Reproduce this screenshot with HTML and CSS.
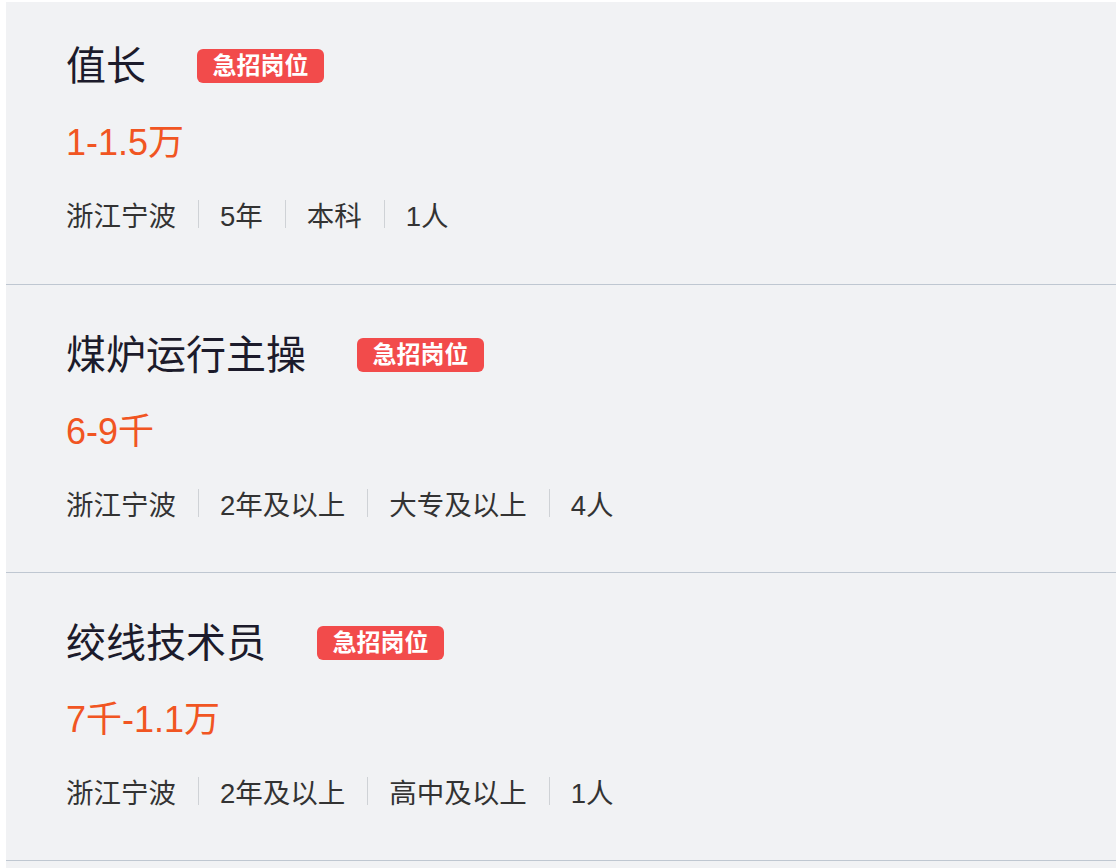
FILE: index.html
```html
<!DOCTYPE html>
<html>
  <head>
  <meta charset="utf-8">
  <link rel="stylesheet" href="styles.css">
  </head>
  <body>
    <div class="job-list">
      <div class="job">
        <div class="job-head">
          <span class="job-name">值长</span>
          <span class="urgent">急招岗位</span>
        </div>
        <div class="salary">1-1.5万</div>
        <div class="meta">
          <span>浙江宁波</span><i></i><span>5年</span><i></i><span>本科</span><i></i><span>1人</span>
        </div>
      </div>
      <div class="job">
        <div class="job-head">
          <span class="job-name">煤炉运行主操</span>
          <span class="urgent">急招岗位</span>
        </div>
        <div class="salary">6-9千</div>
        <div class="meta">
          <span>浙江宁波</span><i></i><span>2年及以上</span><i></i><span>大专及以上</span><i></i><span>4人</span>
        </div>
      </div>
      <div class="job">
        <div class="job-head">
          <span class="job-name">绞线技术员</span>
          <span class="urgent">急招岗位</span>
        </div>
        <div class="salary">7千-1.1万</div>
        <div class="meta">
          <span>浙江宁波</span><i></i><span>2年及以上</span><i></i><span>高中及以上</span><i></i><span>1人</span>
        </div>
      </div>
    </div>
  </body>
</html>
```

FILE: styles.css
```css
    body {
      margin: 0;
      background: #fff;
      font-family: "Liberation Sans", "Noto Sans CJK SC", sans-serif;
    }
    .job-list {
      margin: 2px 0 0 6px;
      padding-bottom: 12px;
      width: 1110px;
      background: #f1f2f4;
    }
    .job {
      height: 287px;
      padding: 0 0 0 60px;
      border-bottom: 1px solid #bfc7d1;
    }
    .job:first-child {
      height: 281px;
    }
    .job-head {
      display: flex;
      align-items: center;
      height: 40px;
      padding-top: 50px;
    }
    .job:first-child .job-head {
      padding-top: 44px;
    }
    .job:first-child {
      height: 282px;
    }
    .job-name {
      font-size: 40px;
      line-height: 40px;
      color: #1c1b2b;
      margin-right: 51px;
    }
    .urgent {
      display: inline-block;
      width: 127px;
      height: 34px;
      line-height: 34px;
      text-align: center;
      border-radius: 6px;
      background: #f24b4b;
      color: #fff;
      font-weight: bold;
      font-size: 24px;
    }
    .salary {
      margin-top: 37px;
      font-size: 36px;
      line-height: 40px;
      color: #f15522;
    }
    .meta {
      display: flex;
      align-items: center;
      margin-top: 35px;
      height: 32px;
      font-size: 27.5px;
      color: #333;
    }
    .meta i {
      width: 1px;
      height: 28px;
      margin: 0 21px 0 22px;
      background: #cfd2d6;
    }
```
